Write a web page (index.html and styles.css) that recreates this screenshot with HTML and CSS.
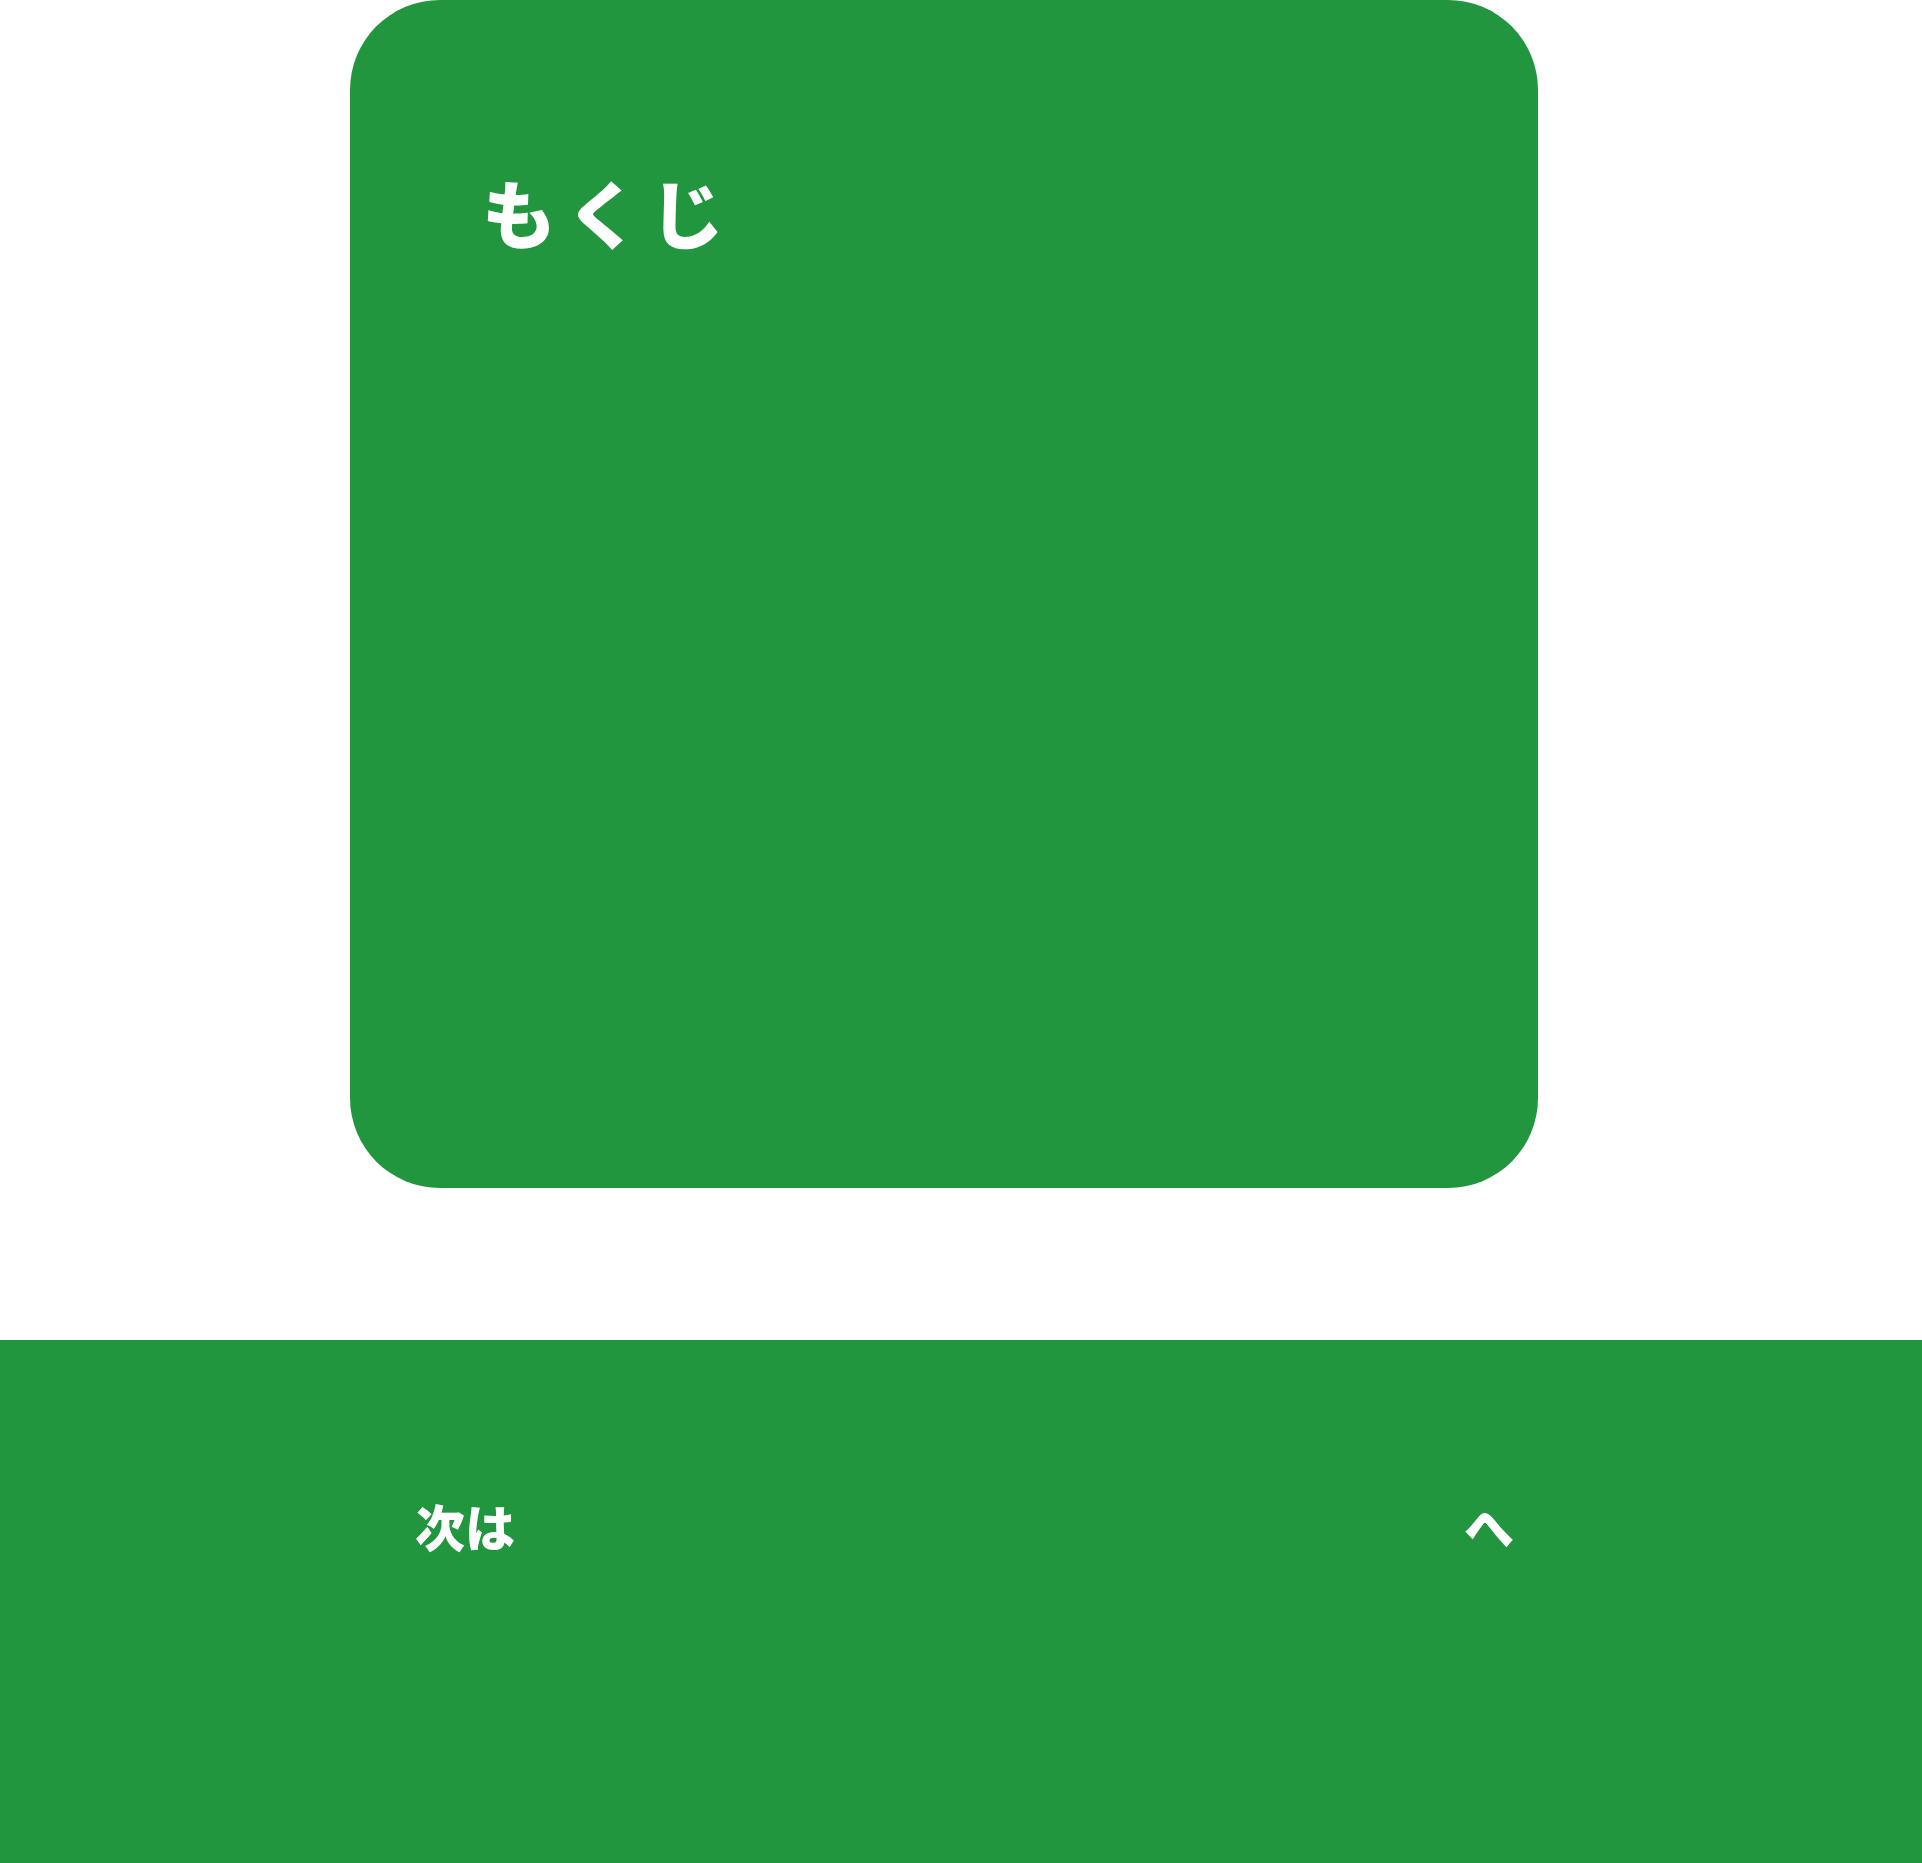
FILE: index.html
```html
<!DOCTYPE html>
<html lang="ja">
<head>
<meta charset="utf-8">
<title>もくじ</title>
<link rel="stylesheet" href="styles.css">
</head>
<body>
<main class="page">
  <section class="toc-card">
    <h2 class="toc-title">もくじ</h2>
  </section>
  <nav class="next-band">
    <div class="next-inner">
      <span class="next-label">次は</span>
      <span class="next-to">へ</span>
    </div>
  </nav>
</main>
</body>
</html>
```

FILE: styles.css
```css
html, body {
  margin: 0;
  padding: 0;
  background: #ffffff;
}
body {
  font-family: "Noto Sans CJK JP", "Noto Sans", sans-serif;
  color: #ffffff;
}
.page {
  display: flex;
  flex-direction: column;
}
.toc-card {
  margin-left: 350px;
  width: 1188px;
  height: 1188px;
  box-sizing: border-box;
  background: #21963f;
  border-radius: 90px;
  padding: 174px 0 0 132px;
}
.toc-title {
  margin: 0;
  font-size: 74px;
  font-weight: 900;
  letter-spacing: 10px;
  line-height: 1;
}
.next-band {
  margin-top: 152px;
  height: 523px;
  background: #21963f;
}
.next-inner {
  display: flex;
  justify-content: space-between;
  align-items: center;
  padding: 160px 408px 0 415px;
  font-size: 50px;
  font-weight: 900;
  line-height: 1;
}
```
